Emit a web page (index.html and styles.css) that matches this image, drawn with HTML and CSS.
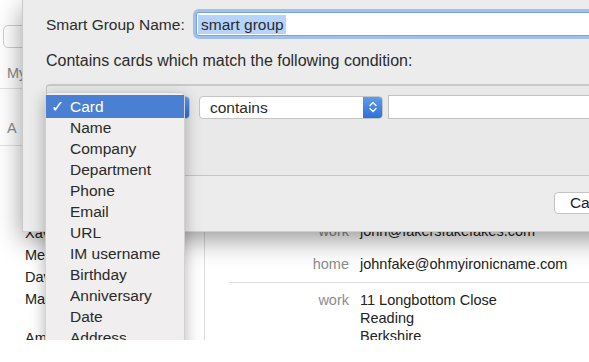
FILE: index.html
```html
<!DOCTYPE html>
<html lang="en">
<head>
    <meta charset="UTF-8">
    <title>Smart Group</title>
    <link rel="stylesheet" href="styles.css">
</head>
<body>
    <div class="screen">
        <div class="window">
            <aside class="sidebar">
                <div class="search"></div>
                <div class="sect sect-my">My</div>
                <div class="sect sect-a">A</div>
                <ul class="names">
                    <li>Xavier Ray</li>
                    <li>Megan Fox</li>
                    <li>Dave Hill</li>
                    <li>Mark Stone</li>
                    <li class="gap">Amy Pond</li>
                </ul>
            </aside>
            <main class="detail">
                <div class="field-row first">
                    <span class="lbl">work</span>
                    <span class="val">john@fakersfakefakes.com</span>
                </div>
                <div class="field-row second">
                    <span class="lbl">home</span>
                    <span class="val">johnfake@ohmyironicname.com</span>
                </div>
                <div class="field-row address">
                    <span class="lbl">work</span>
                    <span class="val">11 Longbottom Close<br>Reading<br>Berkshire</span>
                </div>
            </main>
        </div>

        <div class="sheet">
            <div class="name-row">
                <label class="name-label">Smart Group Name:</label>
                <div class="name-field"><span class="sel">smart group</span></div>
            </div>
            <p class="desc">Contains cards which match the following condition:</p>
            <div class="cond-box">
                <div class="cond-row">
                    <div class="popup popup-field">
                        <span class="popup-text">Card</span>
                        <span class="stepper"></span>
                    </div>
                    <div class="popup popup-op">
                        <span class="popup-text">contains</span>
                        <span class="stepper">
                            <svg width="10" height="14" viewBox="0 0 10 14">
                                <path d="M2 5.5 L5 2.5 L8 5.5 M2 8.5 L5 11.5 L8 8.5" fill="none" stroke="#fff" stroke-width="1.4" stroke-linecap="round" stroke-linejoin="round"/>
                            </svg>
                        </span>
                    </div>
                    <div class="cond-input"></div>
                </div>
            </div>
            <div class="buttons">
                <button class="btn">Cancel</button>
                <button class="btn">OK</button>
            </div>
        </div>

        <ul class="menu">
            <li class="active"><span class="check">✓</span>Card</li>
            <li>Name</li>
            <li>Company</li>
            <li>Department</li>
            <li>Phone</li>
            <li>Email</li>
            <li>URL</li>
            <li>IM username</li>
            <li>Birthday</li>
            <li>Anniversary</li>
            <li>Date</li>
            <li>Address</li>
        </ul>
    </div>
</body>
</html>
```

FILE: styles.css
```css
html, body {
    margin: 0;
    background: #fff;
}
body {
    font-family: "Liberation Sans", Arial, sans-serif;
    font-size: 14.5px;
    color: #2b2b2b;
}
.screen {
    position: relative;
    width: 589px;
    height: 340px;
    overflow: hidden;
}

/* background contacts window */
.window {
    display: flex;
    height: 100%;
}
.sidebar {
    width: 205px;
    border-right: 1px solid #dcdcdc;
    padding-top: 25px;
    box-sizing: border-box;
}
.search {
    margin-left: 3px;
    width: 180px;
    height: 23px;
    border: 1px solid #cfcfcf;
    border-radius: 5px;
    box-sizing: border-box;
}
.sect {
    height: 22px;
    line-height: 22px;
    padding-left: 7px;
    color: #8a8a8a;
    border-bottom: 1px solid #e2e2e2;
}
.sect-my {
    margin-top: 14px;
    padding-bottom: 4px;
}
.sect-a {
    margin-top: 28px;
    padding-bottom: 6px;
}
.names {
    list-style: none;
    margin: 0;
    padding: 76px 0 0 25px;
}
.names li {
    height: 22px;
    line-height: 22px;
    color: #222;
}
.names li.gap {
    margin-top: 17px;
}
.detail {
    flex: 1;
    padding-top: 222px;
}
.field-row {
    display: flex;
    line-height: 18px;
}
.field-row .lbl {
    width: 144px;
    text-align: right;
    color: #8c8c8c;
    flex-shrink: 0;
}
.field-row .val {
    margin-left: 11px;
    white-space: nowrap;
    color: #222;
}
.field-row.second {
    margin-top: 15px;
    padding-bottom: 9px;
    margin-left: 24px;
    border-bottom: 1px solid #e0e0e0;
}
.field-row.second .lbl {
    width: 120px;
}
.field-row.address {
    margin-top: 8px;
}

/* sheet */
.sheet {
    position: absolute;
    left: 22px;
    top: 0;
    width: 724px;
    height: 232px;
    box-sizing: border-box;
    background: #ececec;
    border-left: 1px solid #c9c9c9;
    border-bottom: 1px solid #cfcfcf;
    box-shadow: 0 8px 24px rgba(0, 0, 0, .4);
    padding-left: 23px;
    font-size: 15.5px;
}
.name-row {
    display: flex;
    align-items: center;
    padding-top: 11px;
}
.name-label {
    width: 150px;
    line-height: 24px;
    padding-top: 2px;
}
.name-field {
    flex: 1;
    height: 24px;
    box-sizing: border-box;
    background: #fff;
    border: 1px solid #79a3da;
    border-radius: 3px;
    box-shadow: 0 0 0 3px #9fc0ea;
    padding: 2px 0 0 1px;
}
.sel {
    display: inline-block;
    background: #b5d4fb;
    line-height: 19px;
    padding: 0 2px 0 3px;
}
.desc {
    margin: 14px 0 0;
    line-height: 20px;
    font-size: 16px;
}
.cond-box {
    margin-top: 13px;
    height: 92px;
    box-sizing: border-box;
    border: 1px solid #c5c5c5;
    border-top: 2px solid #c9c9c9;
    border-radius: 4px;
    background: #e9e9e9;
    padding: 9px 0 0 9px;
}
.cond-row {
    display: flex;
    align-items: center;
}
.popup {
    display: flex;
    height: 23px;
    box-sizing: border-box;
    background: #fff;
    border: 1px solid #c4c4c4;
    border-radius: 4px;
    overflow: hidden;
}
.popup-text {
    flex: 1;
    line-height: 21px;
    padding-left: 10px;
}
.stepper {
    width: 19px;
    display: flex;
    align-items: center;
    justify-content: center;
    background: linear-gradient(#5e9bef, #2f70d8);
}
.popup-field {
    width: 134px;
}
.popup-op {
    width: 184px;
    margin-left: 9px;
}
.cond-input {
    flex: 1;
    margin-left: 5px;
    height: 24px;
    background: #fff;
    border: 1px solid #c2c2c2;
    box-sizing: border-box;
}
.buttons {
    display: flex;
    justify-content: flex-end;
    gap: 12px;
    margin-top: 16px;
    padding-right: 20px;
}
.btn {
    width: 80px;
    height: 22px;
    font: inherit;
    color: #222;
    background: #fff;
    border: 1px solid #c3c3c3;
    border-radius: 4px;
    padding: 0;
}

/* popup menu */
.menu {
    position: absolute;
    left: 45px;
    top: 92px;
    width: 140px;
    height: 300px;
    margin: 0;
    padding: 3px 0 0;
    list-style: none;
    box-sizing: border-box;
    background: #f0eeee;
    border: 1px solid rgba(0, 0, 0, .12);
    border-radius: 5px;
    box-shadow: 0 5px 16px rgba(0, 0, 0, .3);
    font-size: 15.5px;
}
.menu li {
    position: relative;
    height: 21px;
    line-height: 21px;
    padding-left: 24px;
    color: #2a2a2a;
}
.menu li.active {
    background: #4a80d3;
    color: #fff;
    height: 23px;
    line-height: 23px;
    margin-top: -1px;
    margin-bottom: -1px;
}
.check {
    position: absolute;
    left: 5px;
    font-size: 16px;
}
```
